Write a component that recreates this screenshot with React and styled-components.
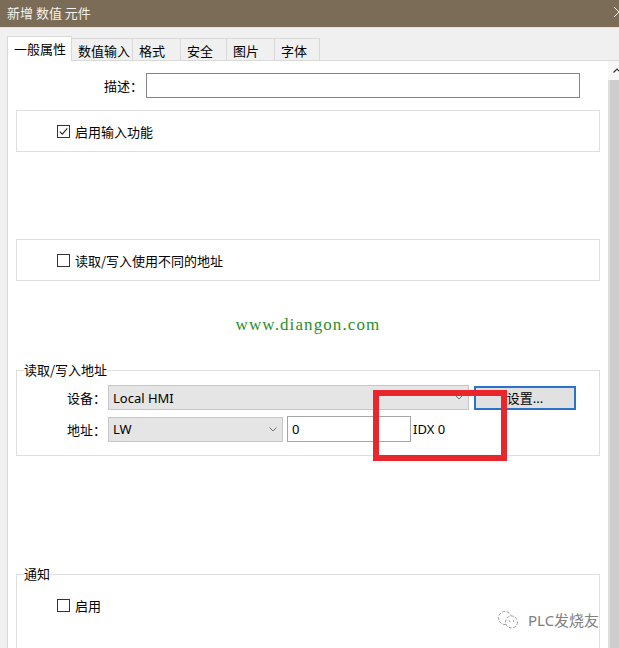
import React from "react";
import styled, { createGlobalStyle } from "styled-components";

const GlobalStyle = createGlobalStyle`
  html, body { margin: 0; padding: 0; background: #f0f0f0; }
  body {
    font-family: "Noto Sans", "Noto Sans CJK SC", sans-serif;
    font-size: 13px;
    color: #000;
  }
  * { box-sizing: border-box; }
`;

const CJK = `"Noto Sans CJK SC", sans-serif`;

const Window = styled.div`
  position: relative;
  width: 619px;
  height: 648px;
  overflow: hidden;
  background: #f0f0f0;
  display: flex;
  flex-direction: column;
`;

const TitleBar = styled.div`
  height: 28px;
  flex: none;
  background: #7a6c56;
  border-bottom: 1px solid #efe2c6;
  display: flex;
  align-items: center;
  padding: 0 0 3px 7px;
  color: #f6f3ee;
  font-family: ${CJK};
  font-size: 13px;
  line-height: 17px;
  white-space: pre;
`;

const CloseIcon = styled.svg`
  margin-left: auto;
  margin-right: -6px;
  flex: none;
`;

const Body = styled.div`
  flex: 1;
  display: flex;
  flex-direction: column;
  padding: 8px 0 0 7px;
  min-height: 0;
`;

const TabStrip = styled.div`
  display: flex;
  align-items: flex-end;
  height: 24px;
  flex: none;
`;

const Tab = styled.div`
  width: ${(p) => p.$w}px;
  height: ${(p) => (p.$active ? 25 : 22)}px;
  margin-bottom: ${(p) => (p.$active ? -1 : 0)}px;
  position: relative;
  z-index: ${(p) => (p.$active ? 1 : 0)};
  background: ${(p) => (p.$active ? "#fff" : "#f0f0f0")};
  border-top: 1px solid #d9d9d9;
  border-right: 1px solid #d9d9d9;
  border-left: ${(p) => (p.$active ? "1px solid #d9d9d9" : "none")};
  padding: 3px 0 0 6px;
  font-family: ${CJK};
  font-size: 13px;
  line-height: 17px;
  color: #000;
  white-space: nowrap;
`;

const Panel = styled.div`
  flex: 1;
  display: flex;
  background: #fff;
  border-top: 1px solid #d9d9d9;
  border-left: 1px solid #d9d9d9;
  min-height: 0;
`;

const Content = styled.div`
  width: 600px;
  flex: none;
  display: flex;
  flex-direction: column;
`;

const ScrollBar = styled.div`
  width: 17px;
  flex: none;
  display: flex;
  flex-direction: column;
  background: #f0f0f0;
`;

const ScrollArrow = styled.div`
  height: 19px;
  display: flex;
  align-items: center;
  justify-content: center;
  background: #f7f7f7;
`;

const ScrollThumb = styled.div`
  flex: 1;
  background: #cdcdcd;
  border-left: 2px solid #dcdcdc;
`;

const FieldRow = styled.div`
  display: flex;
  align-items: center;
  margin-top: ${(p) => p.$top || 0}px;
`;

const FieldLabel = styled.label`
  width: ${(p) => p.$w}px;
  margin-right: ${(p) => p.$gap}px;
  flex: none;
  text-align: right;
  font-family: ${CJK};
  font-size: 13px;
  line-height: 17px;
  white-space: nowrap;
`;

const TextBox = styled.div`
  width: ${(p) => p.$w}px;
  height: ${(p) => p.$h}px;
  flex: none;
  margin-left: ${(p) => p.$ml || 0}px;
  background: #fff;
  border: 1px solid ${(p) => p.$border};
  display: flex;
  align-items: center;
  padding-left: 4px;
  font-family: "Noto Sans", sans-serif;
  font-size: 13px;
`;

const Group = styled.fieldset`
  margin: ${(p) => p.$top}px 8px 0;
  padding: ${(p) => p.$pad};
  border: 1px solid #dedede;
  min-inline-size: 0;
  flex: none;
  ${(p) => (p.$h ? `height: ${p.$h}px;` : "")}
`;

const Legend = styled.legend`
  margin-left: 7px;
  padding: 0;
  font-family: ${CJK};
  font-size: 13px;
  line-height: 16px;
  color: #000;
`;

const CheckRow = styled.div`
  display: flex;
  align-items: center;
  padding-left: ${(p) => p.$indent}px;
`;

const CheckBox = styled.span`
  width: 13px;
  height: 13px;
  flex: none;
  border: 1px solid #333;
  background: #fff;
  display: inline-flex;
  align-items: center;
  justify-content: center;
  margin-right: 5px;
`;

const CheckText = styled.span`
  font-family: ${CJK};
  font-size: 13px;
  line-height: 17px;
  color: #000;
`;

const SiteMark = styled.div`
  margin-top: 34px;
  text-align: center;
  font-family: "Liberation Serif", serif;
  font-size: 17px;
  line-height: 20px;
  letter-spacing: 1.1px;
  color: #2b8f2b;
`;

const AddrRows = styled.div`
  display: flex;
  flex-direction: column;
  gap: 6px;
`;

const Select = styled.div`
  width: ${(p) => p.$w}px;
  height: 25px;
  flex: none;
  background: #e5e5e5;
  border: 1px solid #c6c6c6;
  display: flex;
  align-items: center;
  justify-content: space-between;
  padding: 0 5px 0 4px;
  font-family: "Noto Sans", sans-serif;
  font-size: 13px;
  color: #000;
`;

const PushButton = styled.div`
  width: 102px;
  height: 24px;
  flex: none;
  margin-left: 5px;
  background: #e1e1e1;
  border: 2px solid #2b72c9;
  display: flex;
  align-items: center;
  justify-content: center;
  font-family: "Noto Sans", "Noto Sans CJK SC", sans-serif;
  font-size: 13px;
`;

const IdxText = styled.span`
  margin-left: 2px;
  font-family: "Noto Sans", sans-serif;
  font-size: 13px;
  color: #000;
`;

const RedMark = styled.div`
  position: absolute;
  left: 373px;
  top: 390px;
  width: 134px;
  height: 71px;
  border: 6px solid #e8262b;
  pointer-events: none;
`;

const Stamp = styled.div`
  position: absolute;
  left: 496px;
  top: 610px;
  display: flex;
  align-items: center;
  gap: 8px;
  color: #808080;
  font-family: "Noto Sans", "Noto Sans CJK SC", sans-serif;
  font-size: 15px;
  line-height: 20px;
`;

const Chevron = () => (
  <svg width="8" height="5" viewBox="0 0 8 5">
    <polyline points="0.5,0.5 4,4 7.5,0.5" fill="none" stroke="#6d6d6d" strokeWidth="1" />
  </svg>
);

const Check = ({ checked }) => (
  <CheckBox>
    {checked && (
      <svg width="11" height="11" viewBox="0 0 11 11">
        <polyline points="1.8,5.6 4.3,8.2 9.3,2.4" fill="none" stroke="#222" strokeWidth="1.1" />
      </svg>
    )}
  </CheckBox>
);

const tabs = [
  { label: "一般属性", w: 65, active: true },
  { label: "数值输入", w: 61 },
  { label: "格式", w: 48 },
  { label: "安全", w: 46 },
  { label: "图片", w: 48 },
  { label: "字体", w: 45 },
];

export default function App() {
  return (
    <>
      <GlobalStyle />
      <Window>
        <TitleBar>
          <span>新增 数值 元件</span>
          <CloseIcon width="12" height="12" viewBox="0 0 12 12">
            <line x1="1" y1="1" x2="11" y2="11" stroke="#f4f0ea" strokeWidth="1" />
            <line x1="11" y1="1" x2="1" y2="11" stroke="#f4f0ea" strokeWidth="1" />
          </CloseIcon>
        </TitleBar>
        <Body>
          <TabStrip>
            {tabs.map((t) => (
              <Tab key={t.label} $w={t.w} $active={t.active}>
                {t.label}
              </Tab>
            ))}
          </TabStrip>
          <Panel>
            <Content>
              <FieldRow $top={12}>
                <FieldLabel $w={135} $gap={3}>描述：</FieldLabel>
                <TextBox $w={434} $h={25} $border="#858585" />
              </FieldRow>

              <Group $top={12} $h={42} $pad="12px 0 0 0">
                <CheckRow $indent={40}>
                  <Check checked />
                  <CheckText>启用输入功能</CheckText>
                </CheckRow>
              </Group>

              <Group $top={87} $h={42} $pad="12px 0 0 0">
                <CheckRow $indent={40}>
                  <Check />
                  <CheckText>读取/写入使用不同的地址</CheckText>
                </CheckRow>
              </Group>

              <SiteMark>www.diangon.com</SiteMark>

              <Group $top={27} $pad="7px 0 13px 0">
                <Legend>读取/写入地址</Legend>
                <AddrRows>
                  <FieldRow>
                    <FieldLabel $w={89} $gap={2}>设备：</FieldLabel>
                    <Select $w={361}>
                      <span>Local HMI</span>
                      <Chevron />
                    </Select>
                    <PushButton>设置...</PushButton>
                  </FieldRow>
                  <FieldRow>
                    <FieldLabel $w={89} $gap={2}>地址：</FieldLabel>
                    <Select $w={175}>
                      <span>LW</span>
                      <Chevron />
                    </Select>
                    <TextBox $w={124} $h={26} $ml={4} $border="#a5a5a5">
                      0
                    </TextBox>
                    <IdxText>IDX 0</IdxText>
                  </FieldRow>
                </AddrRows>
              </Group>

              <Group $top={110} $h={120} $pad="15px 0 0 0">
                <Legend>通知</Legend>
                <CheckRow $indent={40}>
                  <Check />
                  <CheckText>启用</CheckText>
                </CheckRow>
              </Group>
            </Content>
            <ScrollBar>
              <ScrollArrow>
                <svg width="8" height="5" viewBox="0 0 8 5">
                  <polyline points="0.5,4.5 4,1 7.5,4.5" fill="none" stroke="#333" strokeWidth="1.2" />
                </svg>
              </ScrollArrow>
              <ScrollThumb />
            </ScrollBar>
          </Panel>
        </Body>
        <RedMark />
        <Stamp>
          <svg width="24" height="20" viewBox="0 0 24 20">
            <circle cx="9" cy="8" r="6.5" fill="none" stroke="#9a9a9a" strokeWidth="1" strokeDasharray="3 1.5" />
            <circle cx="15.5" cy="12" r="6" fill="#fff" stroke="#9a9a9a" strokeWidth="1" strokeDasharray="3 1.5" />
            <circle cx="13.5" cy="11" r="0.8" fill="#9a9a9a" />
            <circle cx="17.5" cy="11" r="0.8" fill="#9a9a9a" />
          </svg>
          <span>PLC发烧友</span>
        </Stamp>
      </Window>
    </>
  );
}
